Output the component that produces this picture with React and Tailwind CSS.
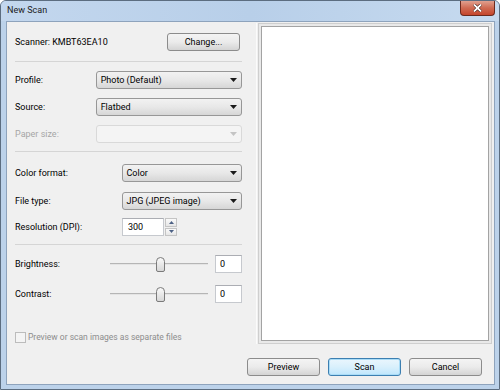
import React from 'react';

const font = { fontFamily: 'Roboto, "Open Sans", sans-serif' };

// small black down-arrow used by the combo boxes
const Arrow = ({ disabled }) => (
  <svg width="7" height="4" viewBox="0 0 7 4" className="shrink-0">
    <path d="M0 0 H7 L3.5 4 Z" fill={disabled ? '#c4c4c4' : '#1a1a1a'} />
  </svg>
);

const Combo = ({ value, width, disabled = false }) => (
  <div
    className={`h-[18px] flex items-center justify-between pl-[4px] pr-[4px] rounded-[3px] border ${
      disabled
        ? 'border-[#d9d9d9] bg-[#f4f4f4]'
        : 'border-[#979797] bg-gradient-to-b from-[#f2f2f2] via-[#e8e8e8] to-[#d6d6d6]'
    } ${width}`}
  >
    <span className="text-[9px] text-black leading-none">{value}</span>
    <Arrow disabled={disabled} />
  </div>
);

const Field = ({ label, disabled = false, children, labelWidth }) => (
  <div className="flex items-center">
    <span className={`text-[9px] leading-none ${labelWidth} ${disabled ? 'text-[#a6a6a6]' : 'text-black'}`}>{label}</span>
    {children}
  </div>
);

const Separator = ({ className }) => (
  <div className={`h-[2px] border-t border-[#d5d5d5] border-b-white ${className}`} />
);

const Thumb = () => (
  <svg width="9" height="15" viewBox="0 0 9 15">
    <defs>
      <linearGradient id="thumbg" x1="0" y1="0" x2="0" y2="1">
        <stop offset="0" stopColor="#fafafa" />
        <stop offset="1" stopColor="#d6d6d6" />
      </linearGradient>
    </defs>
    <path d="M0.5 4.5 Q0.5 0.5 4.5 0.5 Q8.5 0.5 8.5 4.5 V13 Q8.5 14.5 7 14.5 H2 Q0.5 14.5 0.5 13 Z" fill="url(#thumbg)" stroke="#7a7a7a" />
  </svg>
);

const SliderRow = ({ label }) => (
  <div className="flex items-center h-[18px]">
    <span className="text-[9px] leading-none text-black w-[95px]">{label}</span>
    <div className="relative w-[99px] h-[15px] flex items-center">
      <div className="w-full h-[2px] bg-[#e4e4e4] border-t border-[#b5b5b5]" />
      <div className="absolute left-[46px] top-0">
        <Thumb />
      </div>
    </div>
    <div className="ml-[7px] w-[27px] h-[18px] bg-white border border-[#c6c9ce] border-t-[#abadb3] flex items-center pl-[4px]">
      <span className="text-[9px] leading-none">0</span>
    </div>
  </div>
);

const Button = ({ children, primary = false, className = '' }) => (
  <div
    className={`w-[73px] h-[18px] flex items-center justify-center rounded-[3px] border text-[9px] leading-none text-black ${
      primary
        ? 'border-[#3c7fb1] bg-gradient-to-b from-[#eaf6fd] via-[#d9f0fc] to-[#bee6fd] shadow-[inset_0_0_0_1px_#a9dcf7]'
        : 'border-[#8c8c8c] bg-gradient-to-b from-[#f4f4f4] via-[#ebebeb] to-[#d4d4d4]'
    } ${className}`}
  >
    {children}
  </div>
);

export default function App() {
  return (
    <div style={font} className="w-[500px] h-[390px] flex flex-col bg-[#bcd2ea] border border-[#5c6d80] rounded-t-[6px] overflow-hidden">
      {/* title bar */}
      <div className="h-[20px] shrink-0 flex items-start justify-between bg-gradient-to-r from-[#c3d7ee] via-[#b8cfe9] to-[#c6daef]">
        <span className="ml-[6px] mt-[5px] text-[9px] leading-none text-[#1b1b1b]">New Scan</span>
        <div className="mr-[4px] w-[35px] h-[15px] rounded-b-[4px] border border-t-0 border-[#6b2a1e] bg-gradient-to-b from-[#e0a08f] via-[#cf6a52] to-[#c4452c] flex items-center justify-center">
          <svg width="9" height="8" viewBox="0 0 9 8">
            <path d="M1 0.5 L8 7.5 M8 0.5 L1 7.5" stroke="#3b1a14" strokeWidth="3" />
            <path d="M1 0.5 L8 7.5 M8 0.5 L1 7.5" stroke="#ffffff" strokeWidth="1.8" />
          </svg>
        </div>
      </div>

      {/* client area */}
      <div className="flex-1 ml-[5px] mr-[4px] mb-[4px] border border-[#8ea3bc] bg-[#f0f0f0] flex flex-col">
        <div className="flex pt-[1px]">
          {/* settings column */}
          <div className="w-[250px] pl-[8px] pr-[14px] pt-[10px] flex flex-col border-r border-[#fbfbfb]">
            <div className="flex items-center justify-between">
              <span className="text-[9px] leading-none text-black">Scanner: KMBT63EA10</span>
              <Button className="mr-[2px] w-[72px] h-[17px]">Change...</Button>
            </div>
            <Separator className="mt-[10px]" />

            <div className="mt-[8px] flex flex-col gap-[9px]">
              <Field label="Profile:" labelWidth="w-[81px]">
                <Combo value="Photo (Default)" width="w-[147px]" />
              </Field>
              <Field label="Source:" labelWidth="w-[81px]">
                <Combo value="Flatbed" width="w-[147px]" />
              </Field>
              <Field label="Paper size:" labelWidth="w-[81px]" disabled>
                <Combo value="" width="w-[147px]" disabled />
              </Field>
            </div>
            <Separator className="mt-[8px]" />

            <div className="mt-[11px] flex flex-col">
              <Field label="Color format:" labelWidth="w-[107px]">
                <Combo value="Color" width="w-[121px]" />
              </Field>
              <div className="mt-[10px]">
                <Field label="File type:" labelWidth="w-[107px]">
                  <Combo value="JPG (JPEG image)" width="w-[121px]" />
                </Field>
              </div>
              <div className="mt-[8px]">
                <Field label="Resolution (DPI):" labelWidth="w-[107px]">
                  <div className="w-[42px] h-[18px] bg-white border border-[#c6c9ce] border-t-[#abadb3] flex items-center pl-[5px]">
                    <span className="text-[9px] leading-none">300</span>
                  </div>
                  <div className="ml-[1px] w-[12px] h-[18px] flex flex-col gap-[1px]">
                    <div className="flex-1 border border-[#c4c4c4] bg-gradient-to-b from-[#fafafa] to-[#e6e6e6] flex items-center justify-center">
                      <svg width="5" height="3" viewBox="0 0 5 3"><path d="M0 3 H5 L2.5 0 Z" fill="#4d6185" /></svg>
                    </div>
                    <div className="flex-1 border border-[#c4c4c4] bg-gradient-to-b from-[#fafafa] to-[#e6e6e6] flex items-center justify-center">
                      <svg width="5" height="3" viewBox="0 0 5 3"><path d="M0 0 H5 L2.5 3 Z" fill="#4d6185" /></svg>
                    </div>
                  </div>
                </Field>
              </div>
            </div>
            <Separator className="mt-[8px]" />

            <div className="mt-[9px] flex flex-col gap-[12px]">
              <SliderRow label="Brightness:" />
              <SliderRow label="Contrast:" />
            </div>

            <div className="mt-[29px] flex items-center">
              <div className="w-[11px] h-[11px] border border-[#bcbcbc] bg-[#f4f4f4]" />
              <span className="ml-[2px] text-[8.5px] leading-none text-[#8d8d8d]">Preview or scan images as separate files</span>
            </div>
          </div>

          {/* preview pane */}
          <div className="ml-[1px] w-[234px] h-[321px] border border-[#cfcfcf] bg-[#e9e9e9] p-[2px]">
            <div className="w-full h-full bg-white border border-[#a3a3a3]" />
          </div>
        </div>

        {/* dialog buttons */}
        <div className="mt-[14px] flex justify-end gap-[8px] pr-[12px]">
          <Button>Preview</Button>
          <Button primary>Scan</Button>
          <Button>Cancel</Button>
        </div>
      </div>
    </div>
  );
}
